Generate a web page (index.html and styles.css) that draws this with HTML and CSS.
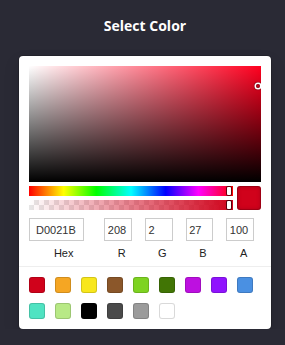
FILE: index.html
```html
<!DOCTYPE html>
<html lang="en">
<head>
  <meta charset="UTF-8" />
  <meta name="viewport" content="width=device-width, initial-scale=1.0"/>
  <title>Select Color</title>
  <link rel="stylesheet" href="styles.css">
</head>
<body>
  <h1 class="title">Select Color</h1>

  <div class="picker">
    <div class="saturation">
      <div class="sat-white"></div>
      <div class="sat-black"></div>
      <div class="sat-pointer" style="left: 99%; top: 18.4%;"></div>
    </div>

    <div class="controls">
      <div class="sliders">
        <div class="hue">
          <div class="slider-pointer hue-pointer" style="left: 97.9%;"></div>
        </div>
        <div class="alpha">
          <div class="alpha-fill"></div>
          <div class="slider-pointer" style="left: 100%;"></div>
        </div>
      </div>
      <div class="active-color"></div>
    </div>

    <div class="fields">
      <div class="field field-double">
        <input class="field-input" value="D0021B">
        <label class="field-label">Hex</label>
      </div>
      <div class="field">
        <input class="field-input" value="208">
        <label class="field-label">R</label>
      </div>
      <div class="field">
        <input class="field-input" value="2">
        <label class="field-label">G</label>
      </div>
      <div class="field">
        <input class="field-input" value="27">
        <label class="field-label">B</label>
      </div>
      <div class="field">
        <input class="field-input" value="100">
        <label class="field-label">A</label>
      </div>
    </div>

    <div class="presets">
      <div class="swatch" style="background: #D0021B;"></div>
      <div class="swatch" style="background: #F5A623;"></div>
      <div class="swatch" style="background: #F8E71C;"></div>
      <div class="swatch" style="background: #8B572A;"></div>
      <div class="swatch" style="background: #7ED321;"></div>
      <div class="swatch" style="background: #417505;"></div>
      <div class="swatch" style="background: #BD10E0;"></div>
      <div class="swatch" style="background: #9013FE;"></div>
      <div class="swatch" style="background: #4A90E2;"></div>
      <div class="swatch" style="background: #50E3C2;"></div>
      <div class="swatch" style="background: #B8E986;"></div>
      <div class="swatch" style="background: #000000;"></div>
      <div class="swatch" style="background: #4A4A4A;"></div>
      <div class="swatch" style="background: #9B9B9B;"></div>
      <div class="swatch" style="background: #FFFFFF;"></div>
    </div>
  </div>
</body>
</html>
```

FILE: styles.css
```css
body {
  font-family: 'Liberation Sans', Arial, sans-serif;
  margin: 0;
  padding: 0;
  background: #2a2a35;
}

.title {
  margin: 0;
  padding: 16px 0 0 19px;
  width: 252px;
  height: 40px;
  line-height: 20px;
  text-align: center;
  font-family: 'Open Sans', sans-serif;
  font-size: 14px;
  font-weight: bold;
  color: #fff;
}

.picker {
  margin-left: 19px;
  width: 232px;
  padding: 10px 10px 0;
  background: #fff;
  border-radius: 4px;
  box-shadow: 0 0 0 1px rgba(0, 0, 0, .15), 0 8px 16px rgba(0, 0, 0, .15);
}

.saturation {
  position: relative;
  height: 116px;
  background: hsl(352.6, 100%, 50%);
  overflow: hidden;
}

.sat-white, .sat-black {
  position: absolute;
  inset: 0;
}

.sat-white {
  background: linear-gradient(to right, #fff, rgba(255, 255, 255, 0));
}

.sat-black {
  background: linear-gradient(to top, #000, rgba(0, 0, 0, 0));
}

.sat-pointer {
  position: absolute;
  width: 4px;
  height: 4px;
  margin: -3px 0 0 -3px;
  border-radius: 50%;
  box-shadow: 0 0 0 1.5px #fff, inset 0 0 1px 1px rgba(0, 0, 0, .3), 0 0 1px 2px rgba(0, 0, 0, .4);
}

.controls {
  display: flex;
  margin-top: 4px;
}

.sliders {
  flex: 1;
}

.hue, .alpha {
  position: relative;
  height: 10px;
}

.hue {
  background: linear-gradient(to right, #f00 0%, #ff0 17%, #0f0 33%, #0ff 50%, #00f 67%, #f0f 83%, #f00 100%);
}

.alpha {
  margin-top: 4px;
  background-color: #fff;
  background-image:
    linear-gradient(45deg, #e6e6e6 25%, transparent 25%, transparent 75%, #e6e6e6 75%),
    linear-gradient(45deg, #e6e6e6 25%, transparent 25%, transparent 75%, #e6e6e6 75%);
  background-size: 10px 10px;
  background-position: 0 0, 5px 5px;
}

.alpha-fill {
  position: absolute;
  inset: 0;
  background: linear-gradient(to right, rgba(208, 2, 27, 0), #d0021b);
}

.slider-pointer {
  position: absolute;
  top: 1px;
  width: 4px;
  height: 8px;
  margin-left: -6px;
  background: #fff;
  border-radius: 1px;
  box-shadow: 0 0 0 1px rgba(0, 0, 0, .6);
}

.hue-pointer {
  margin-left: -2px;
}

.active-color {
  width: 24px;
  height: 24px;
  margin-left: 4px;
  border-radius: 3px;
  background: #d0021b;
  box-shadow: inset 0 0 0 1px rgba(0, 0, 0, .15), inset 0 0 4px rgba(0, 0, 0, .25);
}

.fields {
  display: flex;
  padding-top: 8px;
}

.field {
  flex: 1;
  padding-left: 6px;
}

.field-double {
  flex: 2;
  padding-left: 0;
}

.field-input {
  display: block;
  box-sizing: border-box;
  width: 80%;
  height: 23px;
  padding: 0 0 0 10%;
  border: none;
  outline: none;
  box-shadow: inset 0 0 0 1px #ccc;
  font-family: 'Liberation Sans', Arial, sans-serif;
  font-size: 11px;
  color: #333;
}

.field-double .field-input {
  padding-left: 7px;
}

.field-label {
  display: block;
  padding: 6px 0 6px;
  line-height: 13px;
  text-align: center;
  font-size: 11px;
  color: #222;
}

.presets {
  display: flex;
  flex-wrap: wrap;
  margin: 0 -10px;
  padding: 10px 0 0 10px;
  border-top: 1px solid #eee;
}

.swatch {
  width: 16px;
  height: 16px;
  margin: 0 10px 10px 0;
  border-radius: 3px;
  box-shadow: inset 0 0 0 1px rgba(0, 0, 0, .15);
}
```
